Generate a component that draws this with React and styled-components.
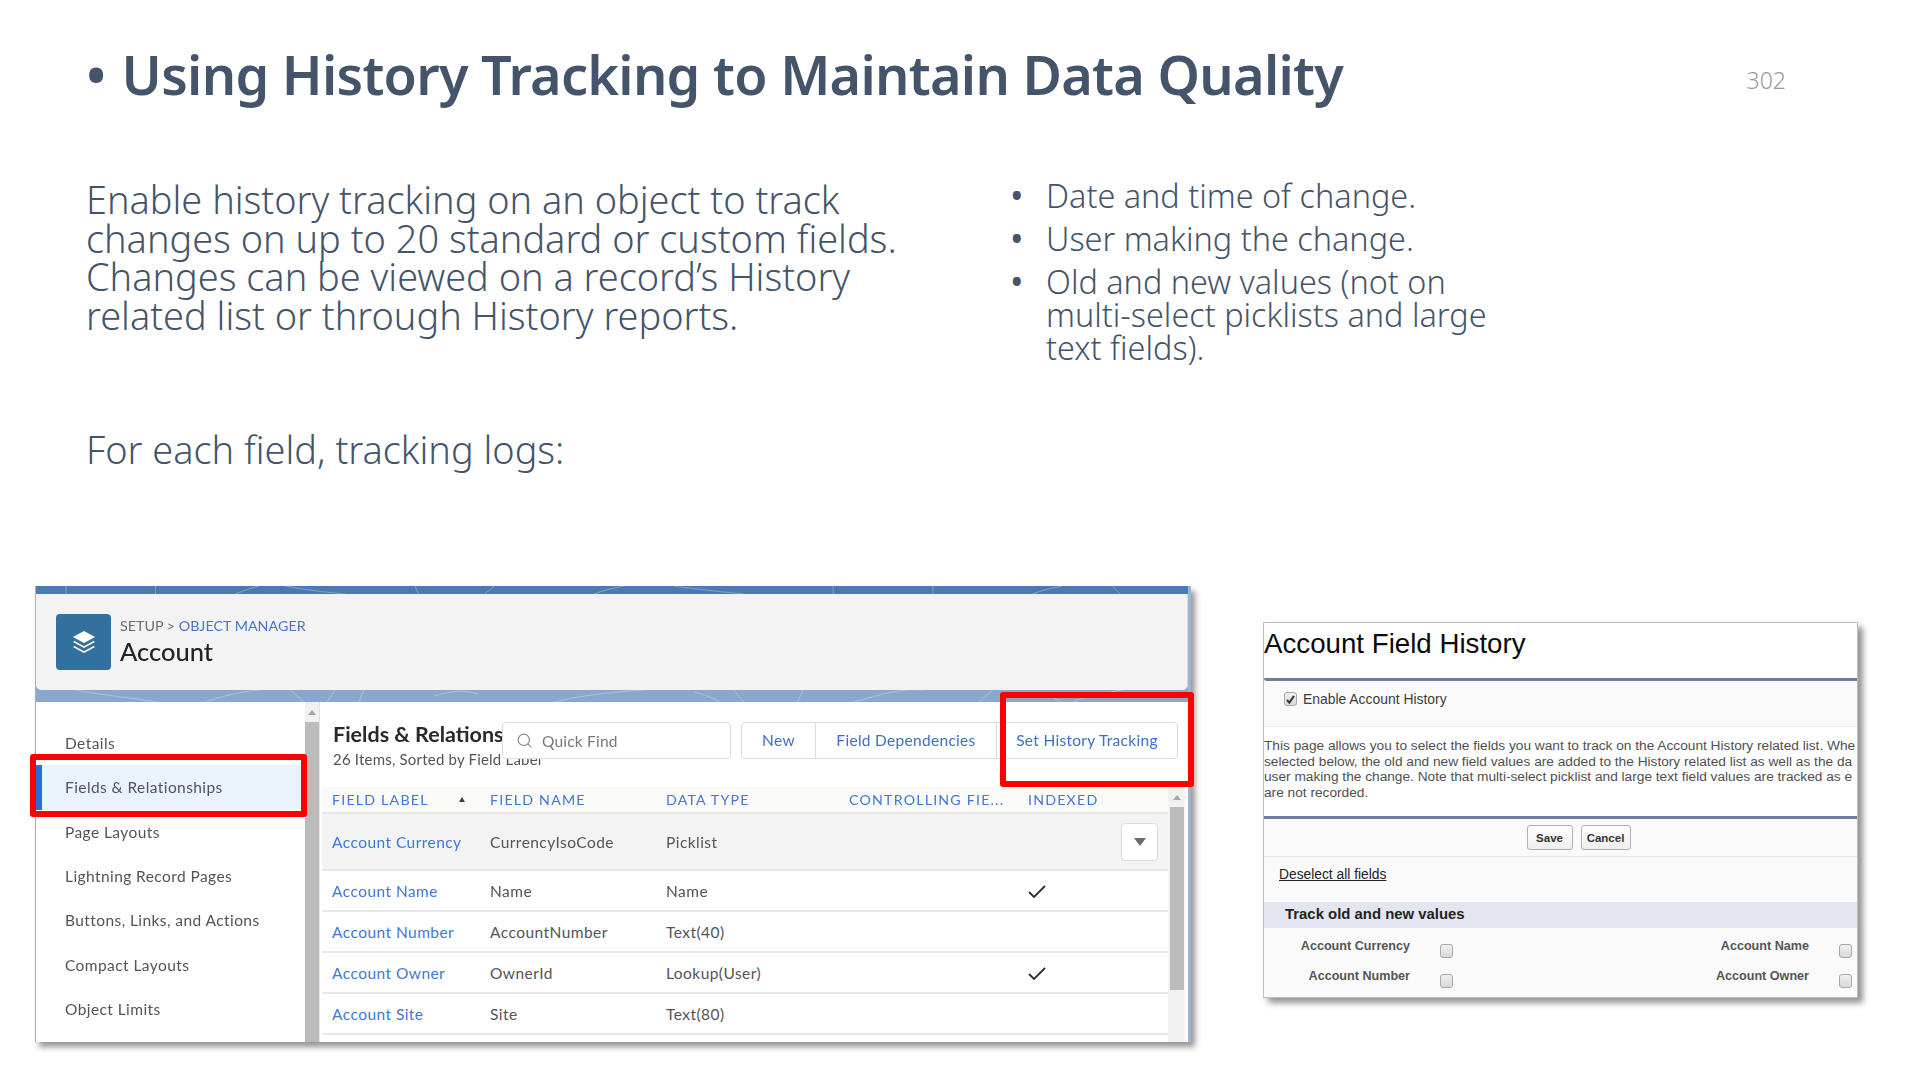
import React from "react";
import styled, { createGlobalStyle } from "styled-components";
import { Search } from "lucide-react";

const Global = createGlobalStyle`
  html, body { margin: 0; padding: 0; background: #fff; }
  * { box-sizing: border-box; }
`;

const SlideFrame = styled.div`
  width: 1920px;
  height: 1080px;
  overflow: hidden;
  background: #fff;
  font-family: "Noto Sans", "Liberation Sans", sans-serif;
  color: #44546a;
`;

const TitleRow = styled.header`
  height: 138px;
  padding: 34px 134px 0 86px;
  display: flex;
  justify-content: space-between;
`;

const Title = styled.h1`
  margin: 0;
  font-size: 54px;
  font-weight: 600;
  letter-spacing: -0.72px;
  line-height: 80px;
  white-space: nowrap;
  display: flex;
  gap: 16px;
`;

const PageNumber = styled.span`
  font-size: 23px;
  font-weight: 300;
  color: #9a9a9a;
  line-height: 34px;
  margin-top: 29px;
`;

const Columns = styled.section`
  height: 448px;
  display: grid;
  grid-template-columns: 930px 1fr;
  padding-left: 86px;
`;

const LeftColumn = styled.div`
  display: flex;
  flex-direction: column;
  gap: 96px;
  padding-top: 42px;
`;

const Para = styled.p`
  margin: 0;
  font-size: 37.9px;
  font-weight: 300;
  line-height: 38.6px;
  white-space: pre-line;
`;

const BulletList = styled.ul`
  margin: 0;
  padding: 41px 0 0;
  list-style: none;
  display: flex;
  flex-direction: column;
  gap: 10px;
`;

const Bullet = styled.li`
  font-size: 32.4px;
  font-weight: 300;
  line-height: 33px;
  display: flex;
  white-space: pre-line;
  &::before {
    content: "•";
    font-size: 36px;
    font-weight: 400;
    flex: none;
    width: 36px;
    margin-left: -6px;
  }
`;

const Shots = styled.section`
  display: flex;
  align-items: flex-start;
  padding-left: 35px;
  gap: 72px;
`;

const ObjectShot = styled.div`
  position: relative;
  width: 1156px;
  height: 456px;
  box-shadow: 4px 5px 6px rgba(0, 0, 0, 0.42);
  border-left: 1px solid #b0b0b0;
  border-right: 3px solid #9db4d6;
  background: #fff;
  font-family: Lato, "Open Sans", sans-serif;
  color: #54525a;
`;

const Blur = styled.div`
  filter: blur(0.3px);
  height: 100%;
  display: flex;
  flex-direction: column;
`;

const Band = styled.div`
  height: 116px;
  padding-top: 8px;
  background: linear-gradient(#4a7ab5 0, #4a7ab5 8px, #86a3cd 10px, #8aa7d0 100%);
  flex: none;
  position: relative;
`;

const BandLines = styled.svg`
  position: absolute;
  inset: 0;
  width: 100%;
  height: 100%;
`;

const ObjectHeader = styled.div`
  position: relative;
  height: 96px;
  background: #f3f3f3;
  border-radius: 0 0 5px 5px;
  border-right: 1px solid #d8d8d8;
  padding: 20px 0 0 20px;
  display: flex;
  gap: 9px;
`;

const ObjectIcon = styled.div`
  width: 55px;
  height: 56px;
  border-radius: 4px;
  background: #34709e;
  display: flex;
  align-items: center;
  justify-content: center;
`;

const Crumbs = styled.div`
  font-size: 14.3px;
  line-height: 20px;
  color: #6e6a66;
  margin-top: 2px;
`;

const CrumbLink = styled.span`
  color: #4a74cc;
`;

const ObjectName = styled.div`
  font-size: 25.5px;
  font-weight: 500;
  color: #25232a;
  line-height: 32px;
  margin-top: -1px;
`;

const Body = styled.div`
  flex: 1;
  display: flex;
  min-height: 0;
  overflow: hidden;
`;

const Sidebar = styled.nav`
  width: 269px;
  padding-top: 19px;
  display: flex;
  flex-direction: column;
`;

const SideItem = styled.div`
  height: 44.3px;
  flex: none;
  display: flex;
  align-items: center;
  padding-left: 29px;
  font-size: 15.5px;
  letter-spacing: 0.42px;
  background: ${(p) => (p.$active ? "#eaf2fb" : "transparent")};
  border-left: ${(p) => (p.$active ? "6px solid #2a6ed2" : "0")};
  ${(p) => p.$active && "padding-left: 23px;"}
`;

const SideScroll = styled.div`
  width: 15px;
  display: flex;
  flex-direction: column;
  background: #f1f1f1;
  border-right: 1px solid #e2e2e2;
`;

const Arrow = styled.div`
  height: 20px;
  flex: none;
  display: flex;
  align-items: center;
  justify-content: center;
  &::after {
    content: "";
    border-left: 4px solid transparent;
    border-right: 4px solid transparent;
    border-bottom: 5px solid #a5a5a5;
  }
`;

const Thumb = styled.div`
  background: #bbbbbb;
  flex: ${(p) => (p.$h ? "none" : "1")};
  height: ${(p) => (p.$h ? `${p.$h}px` : "auto")};
`;

const Main = styled.div`
  flex: 1;
  display: flex;
  flex-direction: column;
  min-width: 0;
`;

const MainHead = styled.div`
  height: 85px;
  flex: none;
  position: relative;
  padding: 18px 0 0 13px;
`;

const MainTitle = styled.div`
  font-size: 21.5px;
  font-weight: 700;
  color: #2b2826;
  line-height: 28px;
  white-space: nowrap;
`;

const MainSub = styled.div`
  font-size: 15px;
  letter-spacing: 0.2px;
  line-height: 18px;
  margin-top: 2px;
  color: #54525a;
`;

const QuickFind = styled.div`
  position: absolute;
  left: 182px;
  top: 20px;
  width: 229px;
  height: 37px;
  background: #fff;
  border: 1px solid #dddbda;
  border-radius: 4px;
  display: flex;
  align-items: center;
  gap: 9px;
  padding-left: 13px;
  font-size: 15.5px;
  letter-spacing: 0.2px;
  color: #7a7875;
`;

const ButtonGroup = styled.div`
  position: absolute;
  left: 421px;
  top: 20px;
  height: 37px;
  display: flex;
  border: 1px solid #dddbda;
  border-radius: 4px;
  background: #fff;
`;

const GroupButton = styled.div`
  width: ${(p) => p.$w}px;
  padding-bottom: 1px;
  display: flex;
  align-items: center;
  justify-content: center;
  font-size: 15.5px;
  letter-spacing: 0.3px;
  color: #3f6fc4;
  & + & {
    border-left: 1px solid #dddbda;
  }
`;

const TableWrap = styled.div`
  flex: 1;
  display: flex;
  min-height: 0;
  margin-left: 2px;
`;

const Table = styled.div`
  width: 846px;
  flex: none;
  display: flex;
  flex-direction: column;
`;

const Row = styled.div`
  display: grid;
  grid-template-columns: 158px 176px 183px 179px 1fr;
  align-items: center;
  height: ${(p) => p.$h}px;
  flex: none;
  padding-left: 10px;
  padding-right: 10px;
  font-size: 15.5px;
  letter-spacing: 0.45px;
  background: ${(p) => p.$bg || "#fff"};
  border-bottom: 2px solid #e8e8e8;
`;

const HeadCell = styled.div`
  color: #3f78d6;
  font-size: 14.2px;
  letter-spacing: 1.2px;
  text-transform: uppercase;
  white-space: nowrap;
  display: flex;
  justify-content: space-between;
  padding-right: 25px;
`;

const SortMark = styled.span`
  align-self: center;
  border-left: 3.5px solid transparent;
  border-right: 3.5px solid transparent;
  border-bottom: 5px solid #3e3e3c;
`;

const LinkCell = styled.div`
  color: #3f78d6;
`;

const ActionCell = styled.div`
  display: flex;
  justify-content: flex-end;
`;

const TickCell = styled.div`
  display: flex;
  align-items: center;
  padding-top: 2px;
`;

const RowAction = styled.div`
  width: 37px;
  height: 38px;
  background: #fff;
  border: 1px solid #dddbda;
  border-radius: 4px;
  display: flex;
  align-items: center;
  justify-content: center;
  &::after {
    content: "";
    border-left: 6px solid transparent;
    border-right: 6px solid transparent;
    border-top: 8px solid #6b6b6b;
  }
`;

const TableScroll = styled.div`
  width: 17px;
  flex: none;
  display: flex;
  flex-direction: column;
  align-items: center;
  background: #f1f1f1;
`;

const TableThumb = styled(Thumb)`
  width: 14px;
`;

const RedBox = styled.div`
  position: absolute;
  left: ${(p) => p.$x}px;
  top: ${(p) => p.$y}px;
  width: ${(p) => p.$w}px;
  height: ${(p) => p.$h}px;
  border: 6px solid #ff0000;
  border-radius: 3px;
  pointer-events: none;
`;

const HistoryShot = styled.div`
  width: 595px;
  height: 376px;
  margin-top: 36px;
  border: 1px solid #bdbdbd;
  box-shadow: 5px 5px 6px rgba(0, 0, 0, 0.42);
  background: #fafafa;
  font-family: "Liberation Sans", Arial, sans-serif;
  color: #4f4f4f;
  overflow: hidden;
  display: flex;
  flex-direction: column;
`;

const HistoryTitle = styled.div`
  height: 58px;
  flex: none;
  background: #fff;
  color: #0a0a0a;
  font-size: 27.7px;
  line-height: 41px;
  border-bottom: 3px solid #6f7d9c;
  border-radius: 0 0 0 3px;
`;

const EnableRow = styled.label`
  height: 46px;
  flex: none;
  display: flex;
  align-items: center;
  gap: 6px;
  padding: 0 0 9px 20px;
  font-size: 13.9px;
  color: #3c3c3c;
  border-bottom: 1px solid #efefef;
`;

const Box = styled.span`
  width: 13px;
  height: 14px;
  flex: none;
  display: flex;
  align-items: center;
  justify-content: center;
  border: 1px solid #a9a9a9;
  border-radius: 3px;
  background: linear-gradient(#f0f0f0, #d9d9d9);
`;

const Description = styled.div`
  height: 92px;
  flex: none;
  background: #fff;
  padding-top: 11px;
  border-bottom: 3px solid #6f7d9c;
  font-size: 13.7px;
  line-height: 15.5px;
`;

const DescLine = styled.div`
  white-space: nowrap;
  overflow: hidden;
`;

const SaveBar = styled.div`
  height: 38px;
  flex: none;
  display: flex;
  justify-content: center;
  padding-top: 6px;
  border-bottom: 1px solid #e5e5e5;
`;

const SaveButtons = styled.div`
  display: flex;
  gap: 8px;
  margin-left: 36px;
`;

const SaveButton = styled.div`
  width: ${(p) => p.$w}px;
  height: 25px;
  border: 1px solid #b0b0b0;
  border-radius: 3px;
  background: linear-gradient(#fff, #eeeeee);
  font-size: 11.5px;
  font-weight: 700;
  color: #333;
  display: flex;
  align-items: center;
  justify-content: center;
`;

const DeselectRow = styled.div`
  height: 45px;
  flex: none;
  padding: 10px 0 0 15px;
  font-size: 13.8px;
  line-height: 16px;
  color: #222;
  text-decoration: underline;
`;

const SectionBar = styled.div`
  height: 26px;
  flex: none;
  background: #e3e6f0;
  padding-left: 21px;
  font-size: 14.9px;
  font-weight: 700;
  color: #222;
  line-height: 24px;
`;

const FieldGrid = styled.div`
  display: grid;
  grid-template-columns: 146px 43px 356px 44px;
  grid-auto-rows: 30px;
  padding-top: 6px;
`;

const FieldLabel = styled.div`
  text-align: right;
  font-size: 12.6px;
  font-weight: 700;
  color: #555;
  line-height: 25px;
  height: 25px;
`;

const FieldBox = styled.div`
  padding: 10px 0 0 30px;
`;

const Stack = () => (
  <svg width="26" height="26" viewBox="0 0 26 26" fill="#fff">
    <path d="M13 2 24 8l-11 6L2 8z" />
    <path d="M3.5 12 2 13l11 6 11-6-1.5-1L13 17.2z" />
    <path d="M3.5 17 2 18l11 6 11-6-1.5-1L13 22.2z" />
  </svg>
);

const Tick = () => (
  <svg width="18" height="14" viewBox="0 0 18 14" fill="none" stroke="#2d2d2d" strokeWidth="1.8">
    <path d="M1 7l5 5L17 1" />
  </svg>
);

const SmallTick = () => (
  <svg width="9" height="9" viewBox="0 0 9 9" fill="none" stroke="#333" strokeWidth="2">
    <path d="M1 5l2.4 2.6L8 1" />
  </svg>
);

const sideItems = ["Details", "Fields & Relationships", "Page Layouts", "Lightning Record Pages", "Buttons, Links, and Actions", "Compact Layouts", "Object Limits"];

const rows = [
  ["Account Name", "Name", "Name", true],
  ["Account Number", "AccountNumber", "Text(40)", false],
  ["Account Owner", "OwnerId", "Lookup(User)", true],
  ["Account Site", "Site", "Text(80)", false],
];

const trackedFields = ["Account Currency", "Account Name", "Account Number", "Account Owner"];

export default function App() {
  return (
    <SlideFrame>
      <Global />
      <TitleRow>
        <Title>
          <span>•</span>
          <span>Using History Tracking to Maintain Data Quality</span>
        </Title>
        <PageNumber>302</PageNumber>
      </TitleRow>
      <Columns>
        <LeftColumn>
          <Para>{"Enable history tracking on an object to track\nchanges on up to 20 standard or custom fields.\nChanges can be viewed on a record’s History\nrelated list or through History reports."}</Para>
          <Para>For each field, tracking logs:</Para>
        </LeftColumn>
        <BulletList>
          <Bullet>Date and time of change.</Bullet>
          <Bullet>User making the change.</Bullet>
          <Bullet>{"Old and new values (not on\nmulti-select picklists and large\ntext fields)."}</Bullet>
        </BulletList>
      </Columns>
      <Shots>
        <ObjectShot>
          <Blur>
            <Band>
              <BandLines viewBox="0 0 1156 116" preserveAspectRatio="none" fill="none" stroke="rgba(255,255,255,0.3)">
                <path d="M40 104c30 6 60 8 80 12M170 116c20-8 50-12 70-14M255 104l14 12M300 104l-8 12M330 102l-6 14M400 110c20-6 30-6 44-2M520 116c40-10 90-12 120-14M660 106c10 2 20 6 26 10M700 104l10 12M770 104l-6 12M820 116c30-8 50-14 70-12M960 104l-14 12M1000 108c10 0 20 2 28 8M1040 116c20-8 40-10 60-14" />
                <path d="M30 0v8M120 0v8M200 8c10-4 16-6 24-8M250 0c20 4 40 6 60 8M380 0l4 8M460 0l-10 8M560 8c10-4 20-6 30-8M640 0c30 4 50 6 70 8M800 0v8M900 0v8M1000 8c10-4 20-6 30-8M1080 0l8 8" />
              </BandLines>
              <ObjectHeader>
                <ObjectIcon><Stack /></ObjectIcon>
                <div>
                  <Crumbs>SETUP &gt; <CrumbLink>OBJECT MANAGER</CrumbLink></Crumbs>
                  <ObjectName>Account</ObjectName>
                </div>
              </ObjectHeader>
            </Band>
            <Body>
              <Sidebar>
                {sideItems.map((s, i) => (
                  <SideItem key={s} $active={i === 1}>{s}</SideItem>
                ))}
              </Sidebar>
              <SideScroll>
                <Arrow />
                <Thumb />
              </SideScroll>
              <Main>
                <MainHead>
                  <MainTitle>Fields &amp; Relationships</MainTitle>
                  <MainSub>26 Items, Sorted by Field Label</MainSub>
                  <QuickFind><Search size={17} color="#8a8886" strokeWidth={1.6} />Quick Find</QuickFind>
                  <ButtonGroup>
                    <GroupButton $w={73}>New</GroupButton>
                    <GroupButton $w={181}>Field Dependencies</GroupButton>
                    <GroupButton $w={181}>Set History Tracking</GroupButton>
                  </ButtonGroup>
                </MainHead>
                <TableWrap>
                  <Table>
                    <Row $h={27} $bg="#fafaf9">
                      <HeadCell>Field Label<SortMark /></HeadCell>
                      <HeadCell>Field Name</HeadCell>
                      <HeadCell>Data Type</HeadCell>
                      <HeadCell>Controlling Fie...</HeadCell>
                      <HeadCell>Indexed</HeadCell>
                    </Row>
                    <Row $h={57} $bg="#f3f3f3">
                      <LinkCell>Account Currency</LinkCell>
                      <div>CurrencyIsoCode</div>
                      <div>Picklist</div>
                      <div />
                      <ActionCell><RowAction /></ActionCell>
                    </Row>
                    {rows.map((r) => (
                      <Row key={r[0]} $h={41}>
                        <LinkCell>{r[0]}</LinkCell>
                        <div>{r[1]}</div>
                        <div>{r[2]}</div>
                        <div />
                        <TickCell>{r[3] && <Tick />}</TickCell>
                      </Row>
                    ))}
                  </Table>
                  <TableScroll>
                    <Arrow />
                    <TableThumb $h={183} />
                  </TableScroll>
                </TableWrap>
              </Main>
            </Body>
          </Blur>
          <RedBox $x={-6} $y={168} $w={277} $h={63} />
          <RedBox $x={964} $y={106} $w={194} $h={95} />
        </ObjectShot>
        <HistoryShot>
          <HistoryTitle>Account Field History</HistoryTitle>
          <EnableRow><Box><SmallTick /></Box>Enable Account History</EnableRow>
          <Description>
            <DescLine>This page allows you to select the fields you want to track on the Account History related list. Whe</DescLine>
            <DescLine>selected below, the old and new field values are added to the History related list as well as the da</DescLine>
            <DescLine>user making the change. Note that multi-select picklist and large text field values are tracked as e</DescLine>
            <DescLine>are not recorded.</DescLine>
          </Description>
          <SaveBar>
            <SaveButtons>
              <SaveButton $w={46}>Save</SaveButton>
              <SaveButton $w={50}>Cancel</SaveButton>
            </SaveButtons>
          </SaveBar>
          <DeselectRow>Deselect all fields</DeselectRow>
          <SectionBar>Track old and new values</SectionBar>
          <FieldGrid>
            {trackedFields.map((f) => (
              <React.Fragment key={f}>
                <FieldLabel>{f}</FieldLabel>
                <FieldBox><Box /></FieldBox>
              </React.Fragment>
            ))}
          </FieldGrid>
        </HistoryShot>
      </Shots>
    </SlideFrame>
  );
}
